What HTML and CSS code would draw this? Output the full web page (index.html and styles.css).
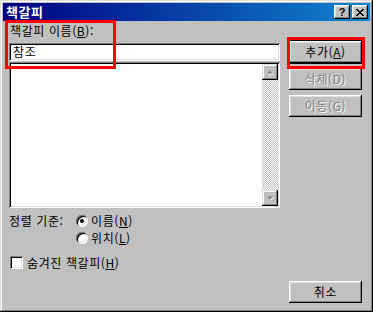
FILE: index.html
```html
<!DOCTYPE html>
<html lang="ko">
  <head>
    <meta charset="utf-8" />
    <link rel="stylesheet" href="styles.css">
    <title>책갈피</title>
  </head>
  <body>
    <div class="window">
      <div class="titlebar">
        <span class="title">책갈피</span>
        <div class="caption-buttons">
          <div class="cap-btn help">?</div>
          <div class="cap-btn close">
            <svg width="8" height="7" viewBox="0 0 8 7">
              <path d="M0 0h2v1h1v1h2V1h1V0h2v1H7v1H6v1H5v1h1v1h1v1h1v1H6V6H5V5H3v1H2v1H0V6h1V5h1V4h1V3H2V2H1V1H0z" fill="#000"/>
            </svg>
          </div>
        </div>
      </div>

      <div class="content">
        <div class="left">
          <div class="label">책갈피 이름(<u>B</u>):</div>
          <div class="textbox">참조</div>
          <div class="listbox">
            <div class="list-area"></div>
            <div class="scrollbar">
              <div class="scroll-btn">
                <svg width="7" height="5" viewBox="0 0 7 5">
                  <path d="M4 1.5l3 3H1z" fill="#fff"/>
                  <path d="M3 0.5l3 3H0z" fill="#808080"/>
                </svg>
              </div>
              <div class="track"></div>
              <div class="scroll-btn">
                <svg width="7" height="5" viewBox="0 0 7 5">
                  <path d="M1 1.5h6l-3 3z" fill="#fff"/>
                  <path d="M0 0.5h6l-3 3z" fill="#808080"/>
                </svg>
              </div>
            </div>
          </div>

          <div class="sort">
            <span class="sort-label">정렬 기준:</span>
            <div class="radios">
              <div class="option"><span class="radio checked"></span>이름(<u>N</u>)</div>
              <div class="option"><span class="radio"></span>위치(<u>L</u>)</div>
            </div>
          </div>

          <div class="option check-row"><span class="checkbox"></span>숨겨진 책갈피(<u>H</u>)</div>
        </div>

        <div class="right">
          <div class="btn default">추가(<u>A</u>)</div>
          <div class="btn disabled">삭제(D)</div>
          <div class="btn disabled">이동(G)</div>
          <div class="btn cancel">취소</div>
        </div>
      </div>

      <div class="mark mark-name"></div>
      <div class="mark mark-add"></div>
    </div>
  </body>
</html>
```

FILE: styles.css
```css
body {
  margin: 0;
  font-family: "Noto Sans CJK KR", "Noto Sans", sans-serif;
  font-size: 12px;
  letter-spacing: 0.6px;
  color: #000;
}

.window {
  position: relative;
  width: 373px;
  height: 312px;
  box-sizing: border-box;
  padding: 3px;
  background: #c0c0c0;
  display: flex;
  flex-direction: column;
  box-shadow: inset -1px -1px #000, inset 1px 1px #dfdfdf,
    inset -2px -2px #808080, inset 2px 2px #fff;
}

/* title bar */
.titlebar {
  height: 18px;
  display: flex;
  align-items: center;
  justify-content: space-between;
  padding: 0 2px 0 3px;
  background: linear-gradient(90deg, #000080, #1084d0);
}
.title {
  color: #fff;
  font-weight: bold;
  font-size: 13px;
  line-height: 18px;
}
.caption-buttons {
  display: flex;
  gap: 2px;
}
.cap-btn {
  width: 16px;
  height: 14px;
  box-sizing: border-box;
  background: #c0c0c0;
  display: flex;
  align-items: center;
  justify-content: center;
  font-family: "Liberation Sans", sans-serif;
  font-weight: bold;
  font-size: 11px;
  line-height: 14px;
  letter-spacing: 0;
  box-shadow: inset -1px -1px #000, inset 1px 1px #fff,
    inset -2px -2px #808080, inset 2px 2px #dfdfdf;
}

/* body */
.content {
  flex: 1;
  display: flex;
  gap: 9px;
  padding: 2px 8px 6px 6px;
}
.left {
  width: 271px;
}
.label {
  height: 16px;
  line-height: 16px;
  padding-left: 1px;
}

.textbox,
.listbox {
  background: #fff;
  box-shadow: inset 1px 1px #808080, inset -1px -1px #fff,
    inset 2px 2px #000, inset -2px -2px #dfdfdf;
}
.textbox {
  margin-top: 4px;
  height: 18px;
  box-sizing: border-box;
  padding: 0 4px;
  line-height: 18px;
}
.listbox {
  margin-top: 1px;
  height: 146px;
  box-sizing: border-box;
  padding: 2px;
  display: flex;
}
.list-area {
  flex: 1;
}
.scrollbar {
  width: 16px;
  display: flex;
  flex-direction: column;
}
.scroll-btn {
  height: 16px;
  background: #c0c0c0;
  display: flex;
  align-items: center;
  justify-content: center;
  box-shadow: inset -1px -1px #000, inset 1px 1px #dfdfdf,
    inset -2px -2px #808080, inset 2px 2px #fff;
}
.track {
  flex: 1;
  background: repeating-conic-gradient(#c0c0c0 0 25%, #fff 0 50%) 0 0 / 2px 2px;
}

/* sort options */
.sort {
  margin-top: 4px;
  display: flex;
}
.sort-label {
  width: 67px;
  height: 17px;
  line-height: 17px;
}
.option {
  height: 17px;
  display: flex;
  align-items: center;
}
.radio {
  position: relative;
  width: 12px;
  height: 12px;
  margin-right: 3px;
  border-radius: 50%;
  background: #fff;
  box-shadow: inset 1px 1px #808080, inset -1px -1px #fff,
    inset 2px 2px #000, inset -2px -2px #dfdfdf;
}
.radio.checked::after {
  content: "";
  position: absolute;
  left: 4px;
  top: 4px;
  width: 4px;
  height: 4px;
  border-radius: 50%;
  background: #000;
}

.check-row {
  margin-top: 8px;
}
.checkbox {
  width: 13px;
  height: 13px;
  margin: 0 4px 0 1px;
  background: #fff;
  box-shadow: inset 1px 1px #808080, inset -1px -1px #fff,
    inset 2px 2px #000, inset -2px -2px #dfdfdf;
}

/* buttons */
.right {
  width: 73px;
  display: flex;
  flex-direction: column;
  gap: 5px;
}
.btn {
  height: 22px;
  line-height: 22px;
  text-align: center;
  background: #c0c0c0;
  box-shadow: inset -1px -1px #000, inset 1px 1px #fff,
    inset -2px -2px #808080, inset 2px 2px #dfdfdf;
}
.btn.default {
  margin-top: 18px;
  outline: 1px solid #000;
}
.btn.disabled {
  color: #808080;
  text-shadow: 1px 1px #fff;
}
.btn.cancel {
  margin-top: auto;
}

/* red annotation frames */
.mark {
  position: absolute;
  border: 3px solid #ff0000;
  box-sizing: border-box;
}
.mark-name {
  left: 5px;
  top: 20px;
  width: 111px;
  height: 49px;
}
.mark-add {
  left: 287px;
  top: 37px;
  width: 78px;
  height: 32px;
}
```
